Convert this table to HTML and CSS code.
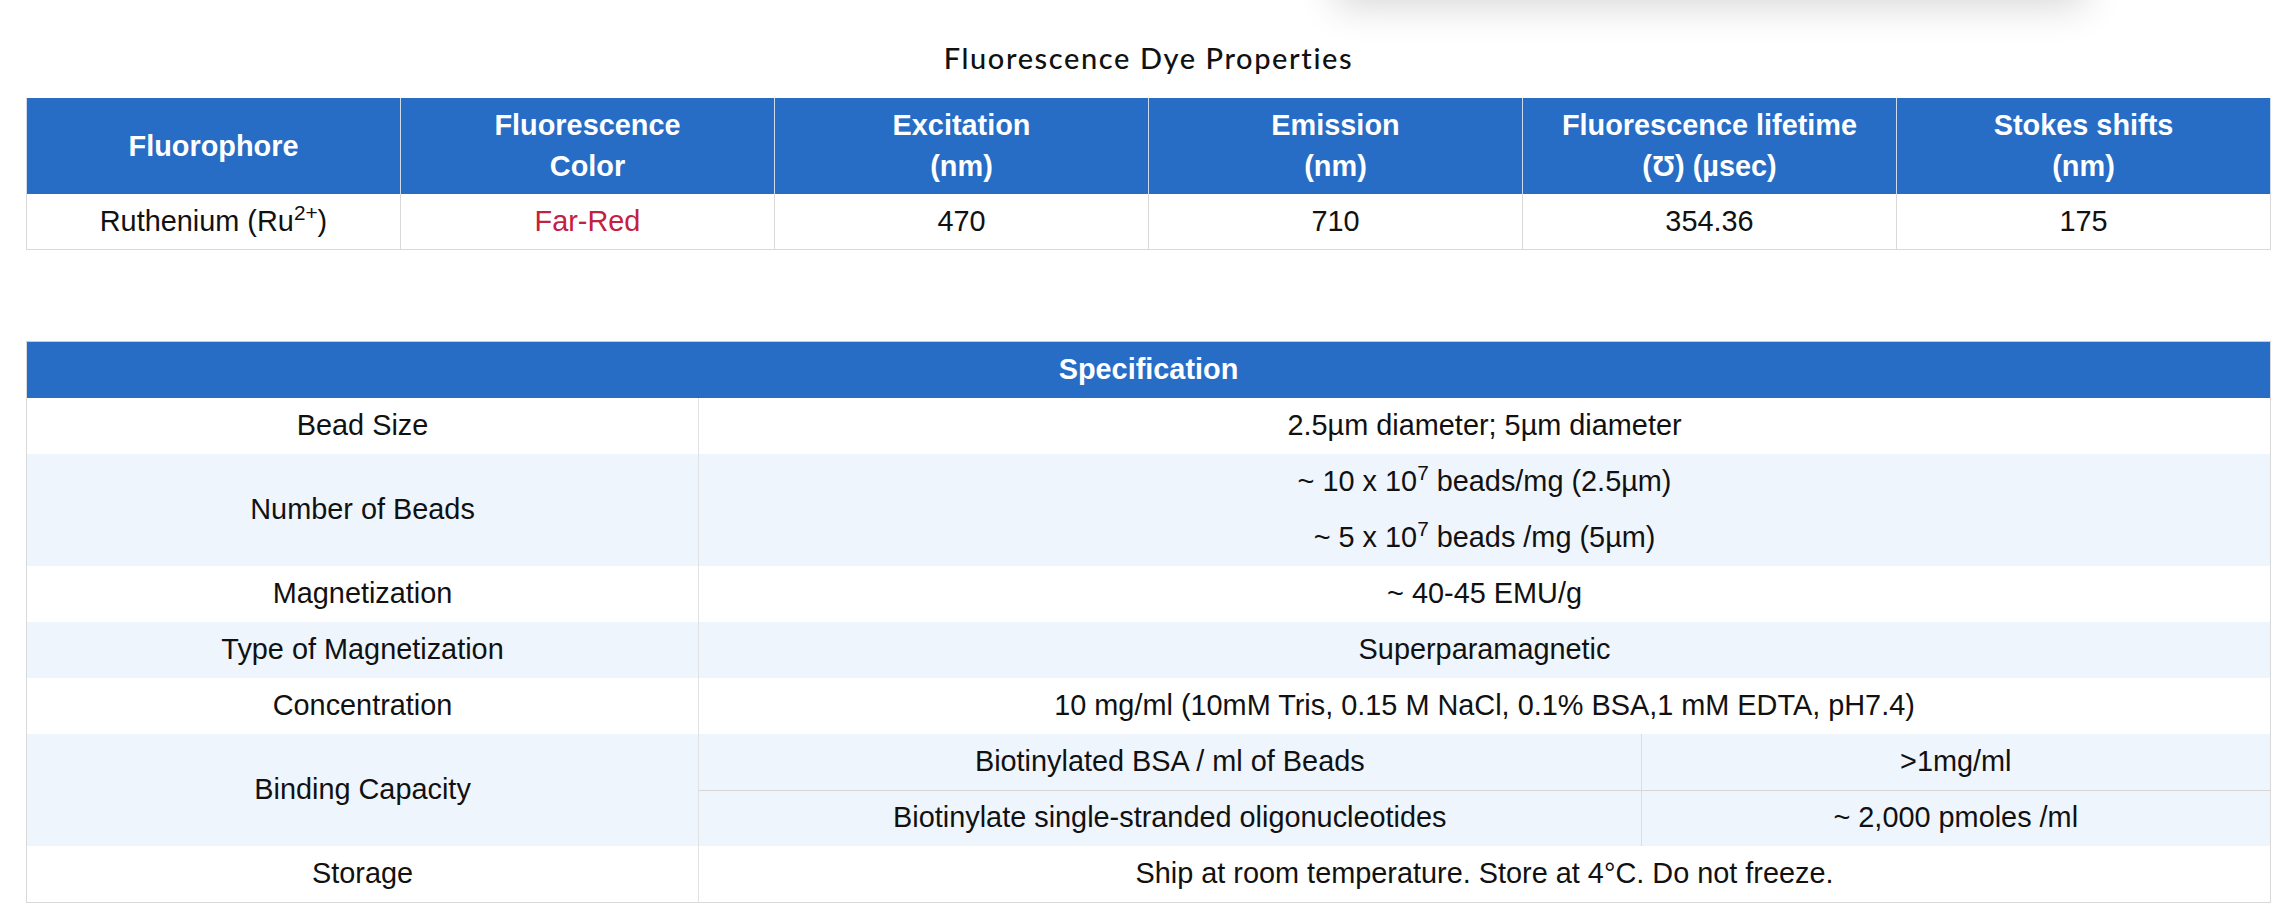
FILE: index.html
```html
<!DOCTYPE html>
<html lang="en">
<head>
<meta charset="utf-8">
<title>Fluorescence Dye Properties</title>
<link rel="stylesheet" href="styles.css">
</head>
<body>
<div class="popup-shadow"></div>
<main class="page">
  <h2 class="title">Fluorescence Dye Properties</h2>
  <table class="dye">
    <thead>
      <tr>
        <th>Fluorophore</th>
        <th>Fluorescence<br>Color</th>
        <th>Excitation<br>(nm)</th>
        <th>Emission<br>(nm)</th>
        <th>Fluorescence lifetime<br>(Ʊ) (µsec)</th>
        <th>Stokes shifts<br>(nm)</th>
      </tr>
    </thead>
    <tbody>
      <tr>
        <td>Ruthenium (Ru<sup>2+</sup>)</td>
        <td class="far-red">Far-Red</td>
        <td>470</td>
        <td>710</td>
        <td>354.36</td>
        <td>175</td>
      </tr>
    </tbody>
  </table>

  <table class="spec">
    <colgroup>
      <col class="c-label">
      <col class="c-main">
      <col class="c-side">
    </colgroup>
    <thead>
      <tr><th colspan="3">Specification</th></tr>
    </thead>
    <tbody>
      <tr class="odd">
        <td class="label">Bead Size</td>
        <td colspan="2">2.5µm diameter; 5µm diameter</td>
      </tr>
      <tr class="even">
        <td class="label" rowspan="2">Number of Beads</td>
        <td colspan="2">~ 10 x 10<sup>7</sup> beads/mg (2.5µm)</td>
      </tr>
      <tr class="even">
        <td colspan="2">~ 5 x 10<sup>7</sup> beads /mg (5µm)</td>
      </tr>
      <tr class="odd">
        <td class="label">Magnetization</td>
        <td colspan="2">~ 40-45 EMU/g</td>
      </tr>
      <tr class="even">
        <td class="label">Type of Magnetization</td>
        <td colspan="2">Superparamagnetic</td>
      </tr>
      <tr class="odd">
        <td class="label">Concentration</td>
        <td colspan="2">10 mg/ml (10mM Tris, 0.15 M NaCl, 0.1% BSA,1 mM EDTA, pH7.4)</td>
      </tr>
      <tr class="even">
        <td class="label" rowspan="2">Binding Capacity</td>
        <td class="split">Biotinylated BSA / ml of Beads</td>
        <td class="split">&gt;1mg/ml</td>
      </tr>
      <tr class="even">
        <td class="split sub">Biotinylate single-stranded oligonucleotides</td>
        <td class="split sub">~ 2,000 pmoles /ml</td>
      </tr>
      <tr class="odd">
        <td class="label">Storage</td>
        <td colspan="2">Ship at room temperature. Store at 4°C. Do not freeze.</td>
      </tr>
    </tbody>
  </table>
</main>
</body>
</html>
```

FILE: styles.css
```css
html, body {
  margin: 0;
  padding: 0;
  background: #ffffff;
}

body {
  font-family: "Liberation Sans", Arial, sans-serif;
  font-size: 28.875px;
  color: #111111;
  position: relative;
  overflow: hidden;
}

.popup-shadow {
  position: absolute;
  top: -90px;
  left: 1335px;
  width: 750px;
  height: 90px;
  background: #ffffff;
  box-shadow: 0 6px 38px rgba(0, 0, 0, 0.16);
}

.page {
  padding: 37px 25px 0 26px;
}

.title {
  margin: 0 0 20px;
  text-align: center;
  font-family: Lato, "Open Sans", sans-serif;
  font-weight: 500;
  font-size: 29px;
  letter-spacing: 1.6px;
  line-height: 41px;
  color: #111111;
}

table {
  width: 100%;
  border-collapse: collapse;
  table-layout: fixed;
}

sup {
  font-size: 0.72em;
  line-height: 0;
  vertical-align: 0.55em;
}

/* dye table */
.dye th {
  background: #276dc6;
  color: #ffffff;
  font-weight: bold;
  line-height: 41px;
  padding: 7px 10px;
  border-left: 1px solid #cfd9e8;
  border-right: 1px solid #cfd9e8;
}

.dye td {
  text-align: center;
  line-height: 41px;
  padding: 7px 10px;
  border: 1px solid #d9d9d9;
  border-top: none;
}

.dye .far-red {
  color: #c4203f;
}

/* specification table */
.spec {
  margin-top: 91px;
  border: 1px solid #d9d9d9;
}

.spec .c-label { width: 29.95%; }
.spec .c-main { width: 42.0%; }
.spec .c-side { width: 28.05%; }

.spec th {
  background: #276dc6;
  color: #ffffff;
  font-weight: bold;
  line-height: 41px;
  padding: 7px 10px 8px;
  border-top: 1px solid #c3cedc;
}

.spec td {
  text-align: center;
  line-height: 41px;
  padding: 7px 10px 8px;
  height: 41px;
}

.spec tr.odd + tr.even td,
.spec tr.even + tr.odd td {
  padding-top: 7px;
}

.spec td.label {
  border-right: 1px solid #e1e1e1;
}

.spec td.split + td.split {
  border-left: 1px solid #dcdcdc;
}

.spec td.sub {
  border-top: 1px solid #d6d6d6;
  padding-top: 6px;
}

.spec tr.odd td {
  background: #ffffff;
}

.spec tr.even td {
  background: #eef5fd;
}
```
